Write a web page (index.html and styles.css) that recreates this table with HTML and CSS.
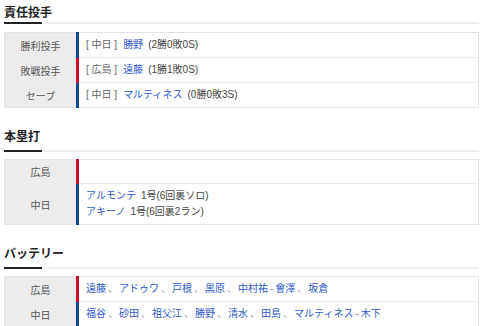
FILE: index.html
```html
<!DOCTYPE html>
<html lang="ja">
<head>
<meta charset="utf-8">
<title>試合結果</title>
<link rel="stylesheet" href="styles.css">
</head>
<body>
<section class="block block--first">
  <h2 class="title">責任投手</h2>
  <table class="stats">
    <tr><th class="label">勝利投手</th><td class="val val--cd"><span class="team">[ 中日 ]</span><a class="name" href="#">勝野</a><span class="rec">(2勝0敗0S)</span></td></tr>
    <tr><th class="label">敗戦投手</th><td class="val val--hc"><span class="team">[ 広島 ]</span><a class="name" href="#">遠藤</a><span class="rec">(1勝1敗0S)</span></td></tr>
    <tr><th class="label">セーブ</th><td class="val val--cd"><span class="team">[ 中日 ]</span><a class="name" href="#">マルティネス</a><span class="rec">(0勝0敗3S)</span></td></tr>
  </table>
</section>
<section class="block">
  <h2 class="title">本塁打</h2>
  <table class="stats">
    <tr class="row--empty"><th class="label">広島</th><td class="val val--hc"></td></tr>
    <tr><th class="label">中日</th><td class="val val--cd">
      <div class="line"><a class="name" href="#">アルモンテ</a><span class="rec">1号(6回裏ソロ)</span></div>
      <div class="line"><a class="name" href="#">アキーノ</a><span class="rec">1号(6回裏2ラン)</span></div>
    </td></tr>
  </table>
</section>
<section class="block">
  <h2 class="title">バッテリー</h2>
  <table class="stats">
    <tr><th class="label">広島</th><td class="val val--hc"><a href="#">遠藤</a><span class="sep">、</span><a href="#">アドゥワ</a><span class="sep">、</span><a href="#">戸根</a><span class="sep">、</span><a href="#">黒原</a><span class="sep">、</span><a href="#">中村祐</a><span class="dash">-</span><a href="#">會澤</a><span class="sep">、</span><a href="#">坂倉</a></td></tr>
    <tr><th class="label">中日</th><td class="val val--cd"><a href="#">福谷</a><span class="sep">、</span><a href="#">砂田</a><span class="sep">、</span><a href="#">祖父江</a><span class="sep">、</span><a href="#">勝野</a><span class="sep">、</span><a href="#">清水</a><span class="sep">、</span><a href="#">田島</a><span class="sep">、</span><a href="#">マルティネス</a><span class="dash">-</span><a href="#">木下</a></td></tr>
  </table>
</section>
</body>
</html>
```
FILE: styles.css
```css
html, body {
  margin: 0;
  background: #fff;
}
body {
  padding: 3px 1px 0 4px;
  font-family: "Liberation Sans", "Noto Sans CJK JP", sans-serif;
  font-size: 10px;
  color: #444;
}
.block {
  margin-top: 18px;
}
.block--first {
  margin-top: 0;
}
.title {
  margin: 0;
  font-size: 12px;
  font-weight: bold;
  color: #222;
  line-height: 20px;
  padding-bottom: 4px;
  border-bottom: 2px solid #eeeeee;
  font-family: "Noto Sans CJK JP", sans-serif;
}
.block--first .title {
  line-height: 18px;
  padding-bottom: 1px;
}
.title::after {
  content: "";
  display: block;
  width: 38px;
  height: 2px;
  background: #222;
  margin-bottom: -2px;
  position: relative;
  top: 4px;
}
.block--first .title::after {
  top: 1px;
}
.stats {
  margin-top: 7px;
  width: 100%;
  border-collapse: collapse;
  border: 1px solid #e3e3e3;
}
.block--first .stats {
  margin-top: 8px;
}
.stats tr + tr th,
.stats tr + tr td {
  border-top: 1px solid #ececec;
}
.label {
  width: 71px;
  padding: 0;
  background: #ebebeb;
  font-weight: normal;
  text-align: center;
  color: #555;
  height: 24px;
  font-family: "Noto Sans CJK JP", sans-serif;
}
.row--empty .label {
  height: 23px;
}
.val {
  padding: 4px 6px 4px 7px;
  line-height: 16px;
  text-align: left;
  vertical-align: middle;
  border-left: 3px solid #11478b;
}
.val--hc {
  border-left-color: #c8102e;
}
.val--cd {
  border-left-color: #11478b;
}
.team {
  color: #666;
  margin-right: 6px;
}
a {
  color: #2f58c8;
  text-decoration: none;
}
.name {
  margin-right: 5px;
}
.rec {
  color: #444;
}
.line {
  line-height: 16px;
}
.sep {
  color: #999;
  margin: 0 1px 0 2px;
}
.dash {
  color: #888;
  margin: 0 2px;
}
```
